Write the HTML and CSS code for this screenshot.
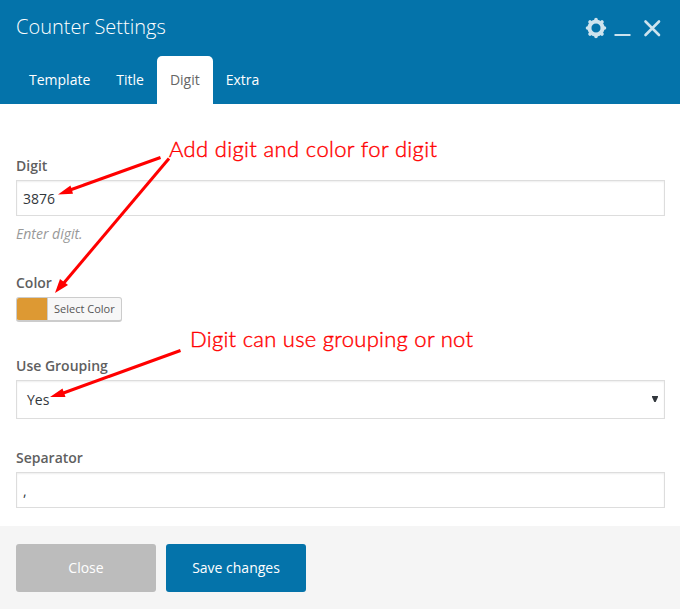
FILE: index.html
```html
<!DOCTYPE html>
<html lang="en">
<head>
<meta charset="utf-8">
<title>Counter Settings</title>
<link rel="stylesheet" href="styles.css">
</head>
<body>
<div class="panel">
  <header class="header">
    <div class="titlebar">
      <h1 class="title">Counter Settings</h1>
      <svg class="controls" width="80" height="24" viewBox="0 0 80 24">
        <g class="gear">
          <circle cx="12" cy="12" r="6.600"/>
          <path d="M12 3.500v2M12 18.500v2M3.500 12h2M18.500 12h2M6 6l1.200 1.200M16.800 16.800l1.200 1.200M6 18l1.200-1.200M16.800 7.200l1.200-1.200"/>
        </g>
        <path class="minimize" d="M30.500 19h16"/>
        <path class="dismiss" d="M61.500 5.500l13.500 13.500M75 5.500l-13.500 13.500"/>
      </svg>
    </div>
    <nav class="tabs">
      <a class="tab"><span>Template</span></a>
      <a class="tab"><span>Title</span></a>
      <a class="tab active"><span>Digit</span></a>
      <a class="tab"><span>Extra</span></a>
    </nav>
  </header>
  <main class="content">
    <section class="field digit">
      <label class="label" for="digit">Digit</label>
      <input class="input" id="digit" type="text" value="3876">
      <p class="hint">Enter digit.</p>
    </section>
    <section class="field color">
      <div class="label">Color</div>
      <button class="picker"><span class="swatch"></span><span class="picker-text">Select Color</span></button>
    </section>
    <section class="field grouping">
      <div class="label">Use Grouping</div>
      <div class="input select"><span>Yes</span><svg width="6" height="7" viewBox="0 0 6 7"><path d="M0 0h6v1L3.700 6H2.300L0 1z"/></svg></div>
    </section>
    <section class="field">
      <label class="label" for="separator">Separator</label>
      <input class="input" id="separator" type="text" value=",">
    </section>
  </main>
  <footer class="footer">
    <button class="button close">Close</button>
    <button class="button save">Save changes</button>
  </footer>
  <svg class="annotations" width="680" height="609" viewBox="0 0 680 609">
    <g class="shafts">
      <path d="M160.500 157.500L70 190"/>
      <path d="M169 158.500L63 284"/>
      <path d="M180.500 350.500L62 393.500"/>
    </g>
    <g class="heads">
      <path d="M58 194.500L70.500 185.500L73 193.800Z"/>
      <path d="M55 293L60 279L68 285Z"/>
      <path d="M50 397L62.500 388.500L65.500 397Z"/>
    </g>
    <text x="169" y="157" textLength="268">Add digit and color for digit</text>
    <text x="190" y="347" textLength="283">Digit can use grouping or not</text>
  </svg>
</div>
</body>
</html>
```

FILE: styles.css
```css
* { box-sizing: border-box; }
body {
  margin: 0;
  background: #fff;
  color: #5f5f5f;
  font: 14px/20px "Open Sans", sans-serif;
}
.panel {
  position: relative;
  display: flex;
  flex-direction: column;
  width: 680px;
  height: 609px;
  overflow: hidden;
}
.header {
  display: flex;
  flex-direction: column;
  height: 104px;
  background: #0473aa;
}
.titlebar {
  display: flex;
  justify-content: space-between;
  height: 56px;
  padding: 13px 16px 0;
}
.title {
  margin: 0;
  color: #fff;
  font-size: 20px;
  font-weight: 300;
  line-height: 28px;
}
.controls {
  margin-top: 3px;
  fill: none;
  stroke: #cde3ee;
  stroke-width: 2;
}
.gear circle { stroke-width: 4; }
.gear path { stroke-width: 3.600; stroke-linecap: round; }
.dismiss { stroke-width: 2.600; stroke-linecap: round; }
.tabs {
  display: flex;
  height: 48px;
  padding-left: 16px;
}
.tab {
  padding: 0 13px;
  color: #fff;
  line-height: 48px;
}
.tab.active {
  border-radius: 5px 5px 0 0;
  background: #fff;
  color: #666;
}
.content {
  flex: 1;
  padding: 52px 15px 0 16px;
}
.label {
  display: block;
  margin-bottom: 4px;
  font-weight: 600;
}
.input {
  display: block;
  width: 100%;
  height: 36px;
  padding: 0 6px;
  border: 1px solid #ddd;
  border-radius: 0;
  background: #fff;
  box-shadow: inset 0 1px 2px rgba(0, 0, 0, .07);
  color: #32373c;
  font: inherit;
}
.field { margin: 0; }
.digit { height: 117px; }
.hint {
  margin: 8px 0 0;
  color: #999;
  font-style: italic;
}
.color { height: 83px; }
.picker {
  display: flex;
  width: 106px;
  height: 25px;
  padding: 0;
  overflow: hidden;
  border: 1px solid #ccc;
  border-bottom-width: 2px;
  border-radius: 3px;
  background: #f7f7f7;
  color: #555;
  font: 11px/22px "Open Sans", sans-serif;
}
.swatch {
  width: 31px;
  height: 22px;
  border-right: 1px solid #ccc;
  background: #dd9933;
}
.picker-text { padding-left: 6px; }
.grouping { height: 92px; }
.select {
  display: flex;
  align-items: center;
  justify-content: space-between;
  height: 39px;
  padding: 0 6px 0 10px;
}
.select svg { fill: #32373c; }
.footer {
  display: flex;
  gap: 10px;
  height: 83px;
  padding: 18px 16px;
  background: #f5f5f5;
}
.button {
  width: 140px;
  height: 48px;
  padding: 0;
  border: 0;
  border-radius: 3px;
  color: #fff;
  font: 14px/48px "Open Sans", sans-serif;
}
.close { background: #bcbcbc; }
.save { background: #0473aa; }
.annotations {
  position: absolute;
  top: 0;
  left: 0;
  pointer-events: none;
  fill: #f00;
  font: 300 22px Lato, sans-serif;
}
.annotations text {
  stroke: #f00;
  stroke-width: .4;
}
.shafts {
  fill: none;
  stroke: #f00;
  stroke-width: 3;
}
```
